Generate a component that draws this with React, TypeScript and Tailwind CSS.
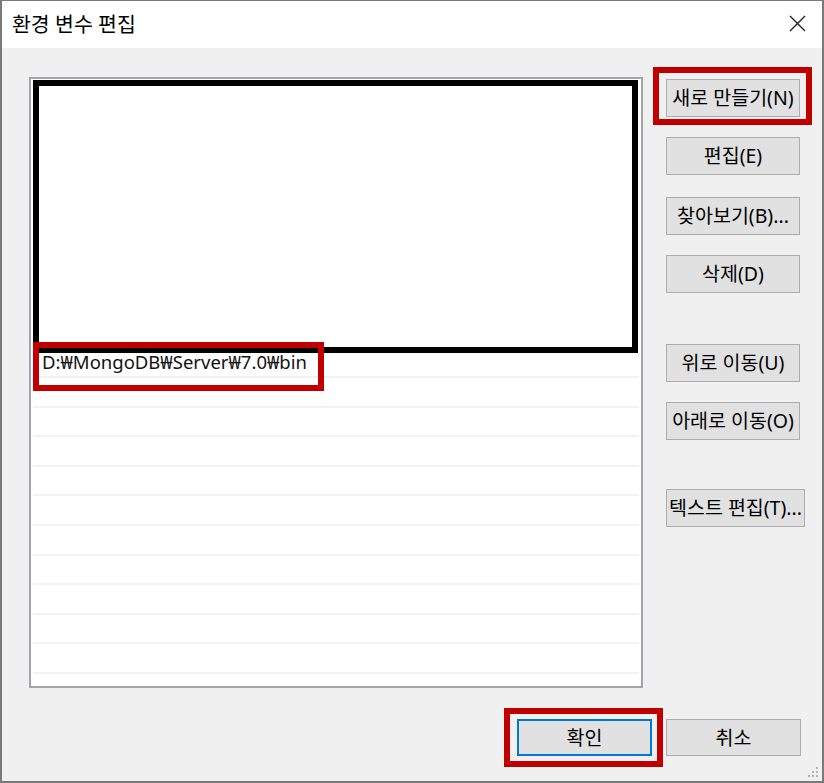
const font = "font-['Noto_Sans','Noto_Sans_CJK_KR',sans-serif]";

const rows = Array.from({ length: 21 }, (_, i) => i);

function Btn({ label, className = "" }: { label: string; className?: string }) {
  return (
    <button
      className={`h-[38px] bg-[#e1e1e1] border border-[#adadad] text-[19.5px] leading-none text-black flex items-center justify-center ${className}`}
    >
      {label}
    </button>
  );
}

export default function App() {
  return (
    <div
      className={`${font} w-[824px] h-[783px] flex flex-col bg-[#f0f0f0] border-x-2 border-b-2 border-t border-[#7a7a7a] overflow-hidden`}
    >
      {/* title bar */}
      <div className="h-[47px] bg-white flex items-center justify-between pl-[10px] pr-[16px]">
        <span className="text-[20.5px] text-black">환경 변수 편집</span>
        <svg width="17" height="17" viewBox="0 0 17 17" className="mt-[-2px]">
          <path d="M1 1 L16 16 M16 1 L1 16" stroke="#222" strokeWidth="1.4" fill="none" />
        </svg>
      </div>

      {/* body */}
      <div className="relative flex-1 flex flex-col">
        <div className="flex pt-[29px] pl-[27px]">
          {/* list */}
          <div className="w-[614px] h-[611px] border-2 border-[#a3a5ab] bg-white pt-[3px] px-[2px] overflow-hidden">
            {rows.map((i) => (
              <div
                key={i}
                className="h-[29.6px] border-b-2 border-[#f2f2f2] flex items-center pl-[9px] text-[18.5px] text-[#111]"
              >
                {i === 9 ? "D:₩MongoDB₩Server₩7.0₩bin" : ""}
              </div>
            ))}
          </div>

          {/* side buttons */}
          <div className="flex flex-col ml-[23px] pt-[2px]">
            <Btn label="새로 만들기(N)" className="w-[134px]" />
            <Btn label="편집(E)" className="w-[134px] mt-[20px]" />
            <Btn label="찾아보기(B)..." className="w-[134px] mt-[22px]" />
            <Btn label="삭제(D)" className="w-[134px] mt-[20px]" />
            <Btn label="위로 이동(U)" className="w-[134px] mt-[51px]" />
            <Btn label="아래로 이동(O)" className="w-[134px] mt-[20px]" />
            <Btn label="텍스트 편집(T)..." className="w-[139px] mt-[49px]" />
          </div>
        </div>

        {/* bottom buttons */}
        <div className="flex justify-end gap-[14px] mt-[31px] pr-[21px]">
          <button className="w-[135px] h-[37px] bg-[#e1e1e1] border-2 border-[#0078d7] text-[19.5px] leading-none text-black">
            확인
          </button>
          <button className="w-[135px] h-[37px] bg-[#e1e1e1] border border-[#adadad] text-[19.5px] leading-none text-black">
            취소
          </button>
        </div>

        {/* annotations */}
        <div className="absolute left-[31px] top-[32px] w-[605px] h-[273px] border-[6px] border-black bg-white" />
        <div className="absolute left-[31px] top-[294px] w-[291px] h-[49px] border-[6px] border-[#c00000]" />
        <div className="absolute left-[651px] top-[19px] w-[159px] h-[58px] border-[6px] border-[#c00000]" />
        <div className="absolute left-[502px] top-[660px] w-[159px] h-[59px] border-[6px] border-[#c00000]" />

        {/* resize grip */}
        <svg width="14" height="14" viewBox="0 0 14 14" className="absolute right-[2px] bottom-[2px]">
          <g fill="#b4b4b4">
            <rect x="10" y="2" width="2" height="2" />
            <rect x="6" y="6" width="2" height="2" />
            <rect x="10" y="6" width="2" height="2" />
            <rect x="2" y="10" width="2" height="2" />
            <rect x="6" y="10" width="2" height="2" />
            <rect x="10" y="10" width="2" height="2" />
          </g>
        </svg>
      </div>
    </div>
  );
}
